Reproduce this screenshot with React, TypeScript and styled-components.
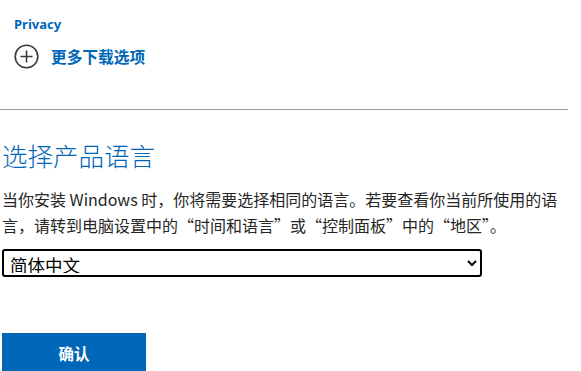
import styled, { createGlobalStyle } from 'styled-components';

const GlobalStyle = createGlobalStyle`
    body {
        margin: 0;
        background: #ffffff;
        font-family: "Noto Sans", "Noto Sans CJK SC", sans-serif;
    }
`

const Page = styled.div`
    width: 568px;
    display: flex;
    flex-direction: column;
`

const Downloads = styled.section`
    display: flex;
    flex-direction: column;
    padding: 15px 0 0 14px;
    height: 94px;
    box-sizing: border-box;
`

const PrivacyLink = styled.a`
    color: #0067b8;
    font-size: 13px;
    font-weight: 700;
    line-height: 18px;
    text-decoration: none;
`

const MoreOptions = styled.a`
    display: flex;
    align-items: center;
    gap: 12px;
    margin-top: 11px;
    color: #0067b8;
    font-size: 15.7px;
    font-weight: 700;
    text-decoration: none;
    font-family: "Noto Sans CJK SC", sans-serif;
`

const Divider = styled.hr`
    width: 100%;
    margin: 15px 0 0;
    border: none;
    border-top: 1px solid #9a9a9a;
`

const LanguageSection = styled.section`
    display: flex;
    flex-direction: column;
    padding: 28px 0 0 2px;
`

const Heading = styled.h2`
    margin: 0;
    color: #0067b8;
    font-size: 25.5px;
    font-weight: 300;
    line-height: 34px;
    font-family: "Noto Sans CJK SC", sans-serif;
`

const Description = styled.p`
    margin: 14px 0 0;
    color: #262626;
    font-size: 16px;
    line-height: 26px;
    font-family: "Noto Sans CJK SC", sans-serif;
`

const LanguageSelect = styled.select`
    width: 480px;
    height: 28px;
    margin-top: 11px;
    padding: 0 4px 2px 2px;
    border: 2px solid #000000;
    border-radius: 3px;
    background: #ffffff;
    color: #000000;
    font-size: 17.5px;
    line-height: 20px;
    font-family: "Noto Sans CJK SC", sans-serif;
`

const ConfirmButton = styled.button`
    width: 144px;
    height: 40px;
    margin-top: 56px;
    border: none;
    background: #0067b8;
    color: #ffffff;
    font-size: 15.5px;
    font-weight: 700;
    font-family: "Noto Sans CJK SC", sans-serif;
    cursor: pointer;
`

const PlusCircle = () => (
    <svg width="25" height="25" viewBox="0 0 25 25" fill="none" stroke="#3b3b3b" strokeWidth="1.6">
        <circle cx="12.5" cy="12.5" r="11.3" />
        <path d="M12.5 6.5v12M6.5 12.5h12" />
    </svg>
);

const App = () => {
    return (
        <Page>
            <GlobalStyle />
            <Downloads>
                <PrivacyLink href="#">Privacy</PrivacyLink>
                <MoreOptions href="#">
                    <PlusCircle />
                    更多下载选项
                </MoreOptions>
            </Downloads>
            <Divider />
            <LanguageSection>
                <Heading>选择产品语言</Heading>
                <Description>
                    当你安装 Windows 时，你将需要选择相同的语言。若要查看你当前所使用的语言，请转到电脑设置中的“时间和语言”或“控制面板”中的“地区”。
                </Description>
                <LanguageSelect defaultValue="zh-cn">
                    <option value="zh-cn">简体中文</option>
                    <option value="zh-tw">繁體中文</option>
                    <option value="en-us">English</option>
                </LanguageSelect>
                <ConfirmButton>确认</ConfirmButton>
            </LanguageSection>
        </Page>
    );
};

export default App;
